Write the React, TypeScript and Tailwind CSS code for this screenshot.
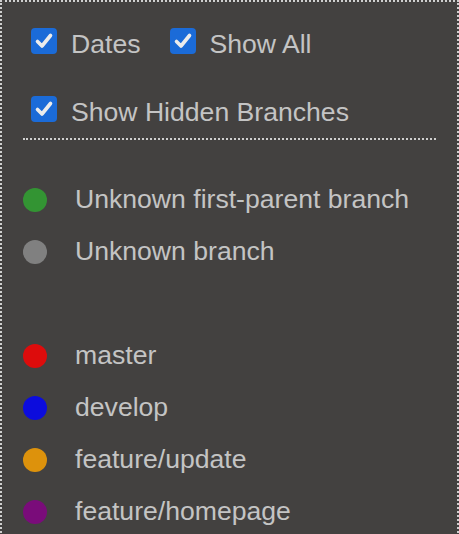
import React from "react";

function Check() {
  return (
    <div className="w-[26px] h-[26px] shrink-0 rounded-[4px] bg-[#1b6bd8] flex items-center justify-center">
      <svg width="26" height="26" viewBox="0 0 26 26">
        <polyline points="6.5,13.5 11,18 19.5,7.5" fill="none" stroke="#ececec" strokeWidth="3.6" strokeLinecap="round" strokeLinejoin="round" />
      </svg>
    </div>
  );
}

const legend: { color: string; label: string }[] = [
  { color: "#339433", label: "Unknown first-parent branch" },
  { color: "#808080", label: "Unknown branch" },
  { color: "", label: "" },
  { color: "#dd0c0c", label: "master" },
  { color: "#0c0cdd", label: "develop" },
  { color: "#dd920c", label: "feature/update" },
  { color: "#7a0c7a", label: "feature/homepage" },
];

export default function App() {
  return (
    <div className="w-[459px] h-[534px] overflow-hidden bg-[#434140] font-['Liberation_Sans',Arial,sans-serif] text-[26.6px] text-[#c4c4c4]">
      <div className="border-2 border-b-0 border-dotted border-[#cfcfcf] h-[560px]">
        <div className="pt-[26px] pl-[29px]">
          <div className="flex items-start h-[32px]">
            <Check />
            <span className="ml-[14px] leading-[32px]">Dates</span>
            <div className="ml-[30px]">
              <Check />
            </div>
            <span className="ml-[13px] leading-[32px]">Show All</span>
          </div>
          <div className="flex items-start h-[32px] mt-[36px]">
            <Check />
            <span className="ml-[14px] leading-[32px]">Show Hidden Branches</span>
          </div>
        </div>
        <div className="mx-[21px] mt-[10px] border-t-2 border-dotted border-[#cfcfcf]" />
        <div className="mt-[34px] pl-[21px]">
          {legend.map((l, i) => (
            <div key={i} className="h-[52px] flex items-center">
              {l.color ? (
                <>
                  <div className="w-[24px] h-[24px] rounded-full shrink-0" style={{ backgroundColor: l.color }} />
                  <span className="ml-[28px] leading-[30px] relative -top-px">{l.label}</span>
                </>
              ) : null}
            </div>
          ))}
        </div>
      </div>
    </div>
  );
}
